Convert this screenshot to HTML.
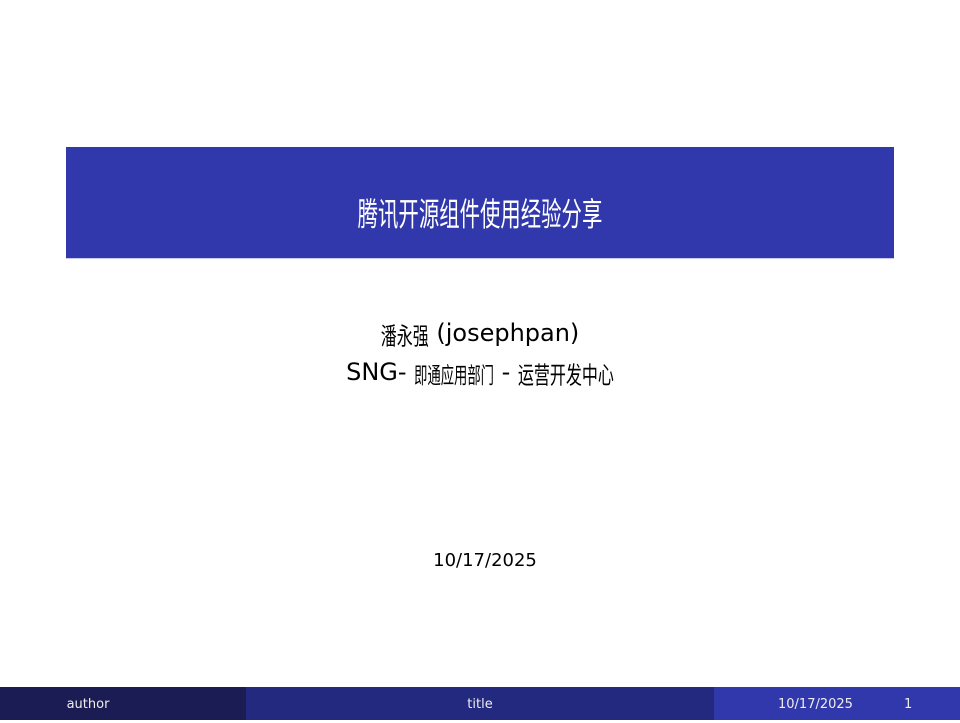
<!DOCTYPE html>
<html><head><meta charset="utf-8"><style>
html,body{margin:0;padding:0;width:960px;height:720px;overflow:hidden;background:#fff;font-family:"DejaVu Sans","Liberation Sans","Noto Sans CJK SC",sans-serif;}
.cjk{font-family:"Noto Sans CJK SC",sans-serif;display:inline-block;}
.bar{position:absolute;left:66px;top:147px;width:828px;height:111px;background:#3138ab;border-bottom:1px solid #c8c9ee;}
.title{position:absolute;left:0;width:960px;top:190px;text-align:center;color:#fff;line-height:42px;}
.line{position:absolute;left:0;width:960px;text-align:center;color:#000;font-size:24px;line-height:30px;}
.date{position:absolute;left:0;width:970px;top:550px;text-align:center;font-size:18px;}
.foot{position:absolute;top:687px;height:33px;color:#eee;font-size:13px;line-height:36px;text-align:center;}
</style></head><body>
<div class="bar"></div>
<div class="title"><span class="cjk" style="font-size:20.4px;transform:scaleY(1.6)">腾讯开源组件使用经验分享</span></div>
<div class="line" style="top:318px"><span class="cjk" style="font-size:16px;transform:scaleY(1.5)">潘永强</span> (josephpan)</div>
<div class="line" style="top:357px">SNG- <span class="cjk" style="font-size:13.3px;transform:scaleY(1.7)">即通应用部门</span> - <span class="cjk" style="font-size:16px;transform:scaleY(1.5)">运营开发中心</span></div>
<div class="date">10/17/2025</div>
<div class="foot" style="left:0;width:246px;background:#1b1c53;"><span style="position:relative;left:-35px">author</span></div>
<div class="foot" style="left:246px;width:468px;background:#242980;">title</div>
<div class="foot" style="left:714px;width:246px;background:#3138ab;text-align:left;"><span style="position:absolute;left:64px">10/17/2025</span><span style="position:absolute;left:190px">1</span></div>
</body></html>
